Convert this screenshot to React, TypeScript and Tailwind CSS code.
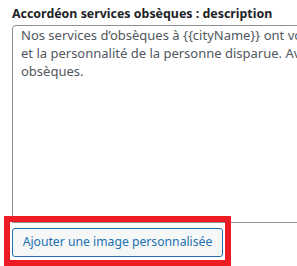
export default function App() {
  return (
    <div className="w-[297px] h-[266px] overflow-hidden bg-white font-['Noto_Sans',sans-serif]">
      <div className="pl-3 pt-[5px] flex flex-col">
        <label className="text-[12.4px] leading-[18px] font-bold text-[#1d2327] whitespace-nowrap">
          Accordéon services obsèques : description
        </label>
        <textarea
          readOnly
          wrap="off"
          className="mt-[2px] w-[400px] h-[198px] resize-none overflow-hidden rounded-tl-[4px] border border-[#8c8f94] pl-2 pr-2 pt-0 pb-0 text-[13px] leading-[18px] text-[#50575e] outline-none"
          defaultValue={
            "Nos services d\u2019obsèques à {{cityName}} ont vocation à honorer la mémoire\net la personnalité de la personne disparue. Avec attention, nous organisons vos\nobsèques."
          }
        />
        <div className="relative mt-[5px] flex">
          <div className="pointer-events-none absolute left-[-8px] top-[-12px] h-[50px] w-[227px] border-[6px] border-[#ed1c24]" />
          <button className="flex h-[29px] w-[211px] items-center justify-center rounded-[3px] border border-[#2271b1] bg-[#f6f7f7] text-[12.2px] text-[#2271b1]">
            Ajouter une image personnalisée
          </button>
        </div>
      </div>
    </div>
  );
}
